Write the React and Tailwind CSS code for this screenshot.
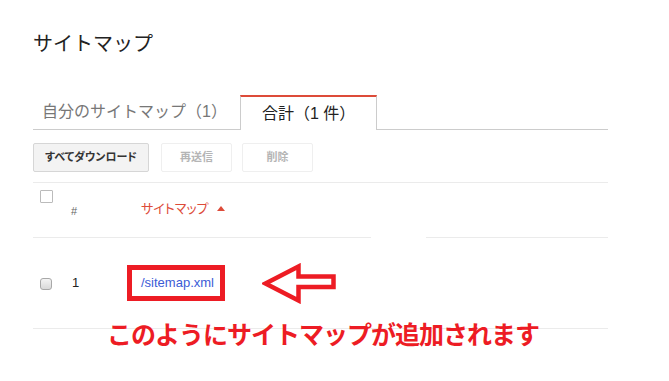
import React from 'react';

const jp = "font-['Liberation_Sans','Noto_Sans_CJK_JP',sans-serif]";

const Arrow = () => (
  <svg width="75" height="41" viewBox="0 0 75 41" className="shrink-0">
    <polygon
      points="3.5,20.5 36.5,3.5 36.5,13.5 71.5,13.5 71.5,24 36.5,24 36.5,37.5"
      fill="white"
      stroke="#ed1c24"
      strokeWidth="4.5"
      strokeLinejoin="miter"
    />
  </svg>
);

const App = () => {
  return (
    <div className={`w-[669px] h-[381px] bg-white overflow-hidden ${jp}`}>
      <div className="pl-[33px] pt-[30px] w-[608px]">
        {/* Title */}
        <h1 className="text-[20px] leading-[28px] text-[#222]">サイトマップ</h1>

        {/* Tabs */}
        <div className="mt-[37px] flex h-[35px] border-b border-[#ccc]">
          <div className="w-[207px] pl-[9px] flex items-center text-[16px] text-[#777]">
            自分のサイトマップ（1）
          </div>
          <div className="w-[137px] -mb-px bg-white border-t-2 border-t-[#dd4b39] border-x border-x-[#ccc] pl-[21px] flex items-center text-[16px] text-[#222]">
            合計（1 件）
          </div>
        </div>

        {/* Buttons */}
        <div className="mt-[13px] flex items-center text-[11px] [font-feature-settings:'palt']">
          <button className="h-[29px] w-[116px] rounded-[2px] border border-[#d6d6d6] bg-[#f3f3f3] text-[#333] font-bold">
            すべてダウンロード
          </button>
          <button className="ml-[12px] h-[29px] w-[71px] rounded-[2px] border border-[#efefef] bg-white text-[#b5b5b5] font-bold">
            再送信
          </button>
          <button className="ml-[10px] h-[29px] w-[71px] rounded-[2px] border border-[#efefef] bg-white text-[#b5b5b5] font-bold">
            削除
          </button>
        </div>

        {/* Table header */}
        <div className="mt-[10px] border-t border-[#ebebeb]">
          <div className="flex h-[54px]">
            <div className="w-[38px] pl-[7px] pt-[7px]">
              <div className="w-[13px] h-[13px] border border-[#bbb] bg-white rounded-[1px]"></div>
            </div>
            <div className="w-[56px] pt-[20px] text-[11px] leading-[16px] text-[#666]">#</div>
            <div className="pl-[14px] pt-[17px] h-[36px] flex items-start gap-[8px] text-[13px] leading-[18px] text-[#dd4b39] [font-feature-settings:'palt']">
              サイトマップ
              <span className="mt-[6px] w-0 h-0 border-x-[4px] border-x-transparent border-b-[5px] border-b-[#dd4b39]"></span>
            </div>
          </div>
          <div className="flex">
            <div className="w-[338px] border-t border-[#ebebeb]"></div>
            <div className="ml-[55px] flex-1 border-t border-[#ebebeb]"></div>
          </div>

          {/* Data row */}
          <div className="flex items-center h-[91px] border-b border-[#ebebeb]">
            <div className="w-[38px] pl-[7px] pt-[2px]">
              <div className="w-[12px] h-[12px] rounded-[3px] border border-[#a8a8a8] bg-gradient-to-b from-[#f4f4f4] to-[#d9d9d9]"></div>
            </div>
            <div className="w-[56px] pl-px text-[13px] text-[#222]">1</div>
            <div className="w-[98px] h-[36px] border-[5px] border-[#ed1c24] pl-[9px] flex items-center text-[13px] text-[#3b5bd6]">
              /sitemap.xml
            </div>
            <div className="ml-[37px] pt-[1px]">
              <Arrow />
            </div>
          </div>
        </div>

        {/* Annotation */}
        <p className="-mt-[9px] pl-[74px] text-[25px] leading-[30px] font-bold text-[#ed1c24] tracking-[-1px]">
          このようにサイトマップが追加されます
        </p>
      </div>
    </div>
  );
};

export default App;
